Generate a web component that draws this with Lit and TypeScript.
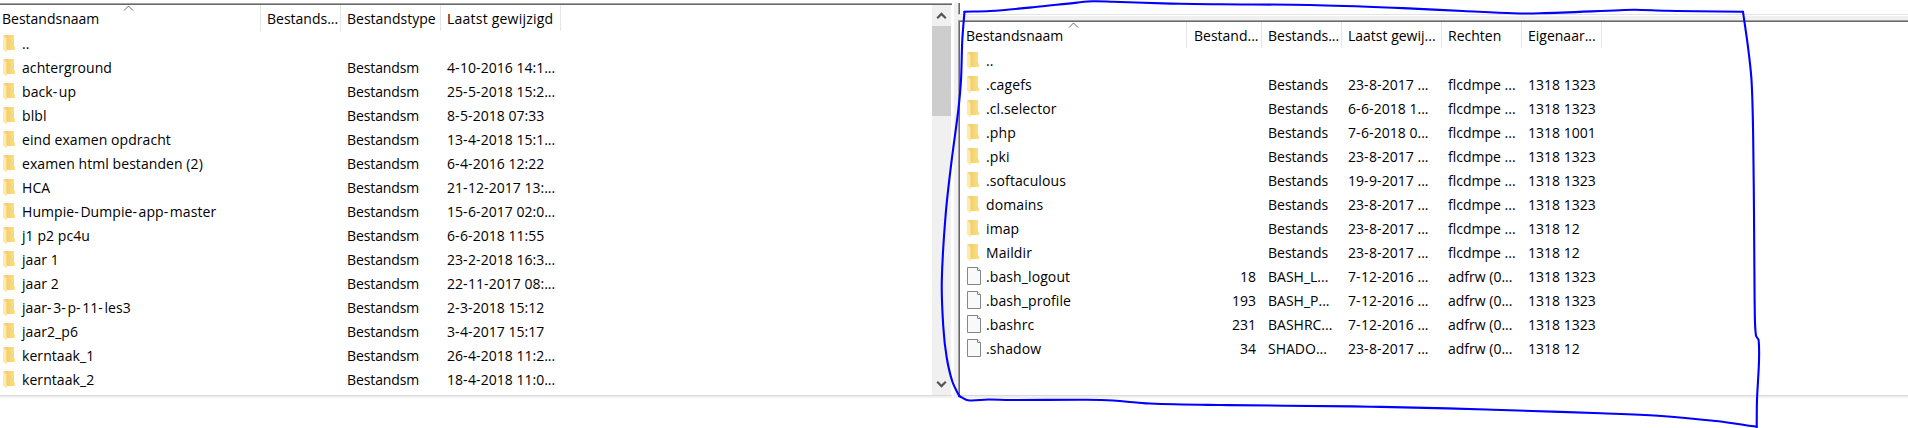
import { LitElement, html, svg, css } from "lit";
import { customElement, property } from "lit/decorators.js";
import { classMap } from "lit/directives/class-map.js";

type Kind = "folder" | "file";
interface Entry {
  kind: Kind;
  cells: string[];
}
type Point = [number, number];

const dir = (...cells: string[]): Entry => ({ kind: "folder", cells });
const file = (...cells: string[]): Entry => ({ kind: "file", cells });
const local = (name: string, date: string) => dir(name, "", "Bestandsm", date);
const remote = (name: string, date: string, owner: string) =>
  dir(name, "", "Bestands", date, "flcdmpe ...", owner);

const LOCAL_COLUMNS = ["Bestandsnaam", "Bestands...", "Bestandstype", "Laatst gewijzigd"];
const LOCAL: Entry[] = [
  dir(".."),
  local("achterground", "4-10-2016 14:1..."),
  local("back-up", "25-5-2018 15:2..."),
  local("blbl", "8-5-2018 07:33"),
  local("eind examen opdracht", "13-4-2018 15:1..."),
  local("examen html bestanden (2)", "6-4-2016 12:22"),
  local("HCA", "21-12-2017 13:..."),
  local("Humpie-Dumpie-app-master", "15-6-2017 02:0..."),
  local("j1 p2 pc4u", "6-6-2018 11:55"),
  local("jaar 1", "23-2-2018 16:3..."),
  local("jaar 2", "22-11-2017 08:..."),
  local("jaar-3-p-11-les3", "2-3-2018 15:12"),
  local("jaar2_p6", "3-4-2017 15:17"),
  local("kerntaak_1", "26-4-2018 11:2..."),
  local("kerntaak_2", "18-4-2018 11:0..."),
];

const REMOTE_COLUMNS = ["Bestandsnaam", "Bestand...", "Bestands...", "Laatst gewij...", "Rechten", "Eigenaar..."];
const REMOTE: Entry[] = [
  dir(".."),
  remote(".cagefs", "23-8-2017 ...", "1318 1323"),
  remote(".cl.selector", "6-6-2018 1...", "1318 1323"),
  remote(".php", "7-6-2018 0...", "1318 1001"),
  remote(".pki", "23-8-2017 ...", "1318 1323"),
  remote(".softaculous", "19-9-2017 ...", "1318 1323"),
  remote("domains", "23-8-2017 ...", "1318 1323"),
  remote("imap", "23-8-2017 ...", "1318 12"),
  remote("Maildir", "23-8-2017 ...", "1318 12"),
  file(".bash_logout", "18", "BASH_L...", "7-12-2016 ...", "adfrw (0...", "1318 1323"),
  file(".bash_profile", "193", "BASH_P...", "7-12-2016 ...", "adfrw (0...", "1318 1323"),
  file(".bashrc", "231", "BASHRC...", "7-12-2016 ...", "adfrw (0...", "1318 1323"),
  file(".shadow", "34", "SHADO...", "23-8-2017 ...", "adfrw (0...", "1318 12"),
];

/* Hand-drawn outline, one list of points per stroke between sharp corners. */
const STROKES: Point[][] = [
  [[964.5, 11.7], [990, 11], [1033, 7.3], [1077, 2.6], [1093, 1.3], [1113, 1.8], [1180, 3.8], [1220, 4.3], [1310, 5], [1393, 7.7], [1463, 11], [1513, 13.3], [1540, 13.3], [1620, 10.2], [1635, 9.7], [1667, 10.8], [1743, 11.8]],
  [[1743, 11.8], [1748, 47], [1751.5, 80], [1753, 127], [1754, 213], [1754.8, 314], [1756, 335.7], [1758.6, 340], [1759, 361], [1757, 400], [1756.7, 427]],
  [[1756.7, 426.7], [1715.8, 421], [1658, 415.7], [1601, 413.3], [1486, 409.5], [1371, 406.7], [1220, 405], [1150, 403.5], [1113, 400.5], [1086, 399.8], [1010, 400], [988, 399.5], [968, 400.3], [959.3, 396]],
  [[959.3, 396], [952.5, 382], [946.7, 357.5], [943.3, 327], [941.8, 281], [945.7, 214], [951.7, 160], [958.3, 110], [961, 80], [962.3, 40], [964.5, 11.7]],
];

function smooth(p: Point[]): string {
  let d = `M${p[0]}`;
  for (let i = 0; i < p.length - 1; i++) {
    const a = p[i - 1] ?? p[i], b = p[i], c = p[i + 1], e = p[i + 2] ?? c;
    const len = Math.hypot(c[0] - b[0], c[1] - b[1]) / 3;
    const t1 = Math.hypot(c[0] - a[0], c[1] - a[1]) || 1;
    const t2 = Math.hypot(e[0] - b[0], e[1] - b[1]) || 1;
    d += `C${b[0] + ((c[0] - a[0]) / t1) * len},${b[1] + ((c[1] - a[1]) / t1) * len} ` +
      `${c[0] - ((e[0] - b[0]) / t2) * len},${c[1] - ((e[1] - b[1]) / t2) * len} ${c}`;
  }
  return d;
}

/* Gives hyphens a wider advance than the font does. */
const spaced = (text: string) =>
  text.split(/(-)/).map((part) => (part === "-" ? html`<span class="hyphen">-</span>` : part));

const folderIcon = html`<svg class="icon" width="16" height="20" viewBox="0 0 16 20">
  <defs><linearGradient id="g" x1="0" x2="1" y1="0" y2="0"><stop offset="0" stop-color="#eecb68" /><stop offset="1" stop-color="#fddf85" /></linearGradient></defs>
  <path d="M2 1H12V12.5H13V16H4Z" fill="url(#g)" />
  <path d="M1 1L4.4 4.2V18.2L1 15.7Z" fill="#ffeaa9" />
  <path d="M1 1H2L5 4V18H4.4L4.4 4.4Z" fill="#f7dc8d" />
</svg>`;

const fileIcon = html`<svg class="icon" width="16" height="20" viewBox="0 0 16 20">
  <path d="M1.5 0.5H11.5L14.5 3.5V17.5H1.5Z" fill="#f8f9fa" stroke="#858585" />
  <path d="M11.5 0.5V3.5H14.5" fill="#fff" stroke="#858585" />
</svg>`;

@customElement("file-list")
class FileList extends LitElement {
  @property({ attribute: false }) columns: string[] = [];
  @property({ attribute: false }) rows: Entry[] = [];

  static styles = css`
    :host {
      display: block;
      flex: 1;
      min-width: 0;
      overflow: hidden;
      background: #fff;
      --tracks: 261px 80px 100px 120px;
    }
    :host(.remote) {
      --tracks: 227px 75px 80px 100px 80px 80px;
    }
    .head,
    .row {
      display: grid;
      grid-template-columns: var(--tracks);
      white-space: pre;
    }
    .head {
      position: relative;
      height: 26px;
      line-height: 27px;
    }
    .head .cell {
      height: 26px;
      border-right: 1px solid #e5e5e5;
    }
    .row {
      height: 24px;
      line-height: 25px;
    }
    .cell {
      box-sizing: border-box;
      padding-left: 6px;
    }
    .head .first {
      padding-left: 2px;
    }
    :host(.remote) .head .first {
      padding-left: 6px;
    }
    :host(.remote) .head .second {
      padding-left: 7px;
    }
    :host(.local) .head .cell:nth-child(4) {
      letter-spacing: 0.22px;
    }
    :host(.local) .row .cell:nth-child(3) {
      letter-spacing: -0.1px;
    }
    .name {
      display: flex;
      padding-left: 2px;
      letter-spacing: 0.07px;
    }
    .name .hyphen {
      letter-spacing: 1.6px;
    }
    .hyphen {
      letter-spacing: 0.4px;
    }
    :host(.remote) .name {
      padding-left: 6px;
      letter-spacing: 0.1px;
    }
    .icon {
      width: 16px;
      height: 20px;
      margin: 3px 4px 0 0;
      flex: none;
    }
    .num {
      text-align: right;
      padding-right: 6px;
    }
    .sort {
      position: absolute;
      left: 123px;
      top: 0;
    }
    :host(.remote) .sort {
      left: 108px;
    }
  `;

  render() {
    return html`
      <div class="head">
        ${this.columns.map((c, i) => html`<div class=${classMap({ cell: true, first: i === 0, second: i === 1 })}>${c}</div>`)}
        <svg class="sort" width="11" height="7" viewBox="0 0 11 7"><path d="M1 5.5L5.5 1L10 5.5" fill="none" stroke="#6a6a6a" /></svg>
      </div>
      ${this.rows.map(
        (r) => html`<div class="row">
          ${r.cells.map((c, i) =>
            i === 0
              ? html`<div class="name">${r.kind === "folder" ? folderIcon : fileIcon}<span>${spaced(c)}</span></div>`
              : html`<div class=${classMap({ cell: true, num: i === 1 })}>${spaced(c)}</div>`
          )}
        </div>`
      )}
    `;
  }
}

@customElement("app-root")
class AppRoot extends LitElement {
  static styles = css`
    :host {
      display: block;
      position: relative;
      width: 1908px;
      height: 428px;
      overflow: hidden;
      background: #fff;
      color: #000;
      font: 14px "Open Sans", "Noto Sans", sans-serif;
    }
    .panes {
      display: flex;
      box-sizing: border-box;
      height: 398px;
      padding-top: 3px;
    }
    .local-frame {
      display: flex;
      box-sizing: border-box;
      width: 952px;
      border-top: 1px solid #a0a0a0;
      border-bottom: 2px solid #f0f0f0;
    }
    .inner {
      display: flex;
      flex: 1;
      min-width: 0;
      border-top: 1px solid #696969;
      border-bottom: 1px solid #d9d9d9;
    }
    .scroll {
      display: flex;
      flex-direction: column;
      width: 19px;
      margin-right: 1px;
      background: #f0f0f0;
    }
    .btn {
      height: 21px;
      flex: none;
    }
    .thumb {
      height: 90px;
      background: #cdcdcd;
    }
    .track {
      flex: 1;
    }
    .splitter {
      width: 4px;
      margin-left: 2px;
      background: #f0f0f0;
    }
    .right {
      display: flex;
      flex-direction: column;
      flex: 1;
      min-width: 0;
    }
    .tree {
      height: 11px;
      border-left: 1px solid #a0a0a0;
      border-bottom: 1px solid #e3e3e3;
    }
    .tree-in {
      height: 11px;
      border-left: 1px solid #696969;
    }
    .gap {
      height: 4px;
      margin-top: 1px;
      background: #f0f0f0;
    }
    .remote-frame {
      display: flex;
      flex: 1;
      min-height: 0;
      border-top: 1px solid #a0a0a0;
      border-left: 1px solid #a0a0a0;
      border-bottom: 2px solid #f0f0f0;
    }
    .remote-in {
      border-left: 1px solid #696969;
    }
    .ink {
      position: absolute;
      inset: 0;
    }
  `;

  render() {
    return html`
      <div class="panes">
        <div class="local-frame">
          <div class="inner">
            <file-list class="local" .columns=${LOCAL_COLUMNS} .rows=${LOCAL}></file-list>
            <div class="scroll">
              <svg class="btn" width="19" height="21" viewBox="0 0 19 21"><path d="M5.2 13.2L9.5 8.9L13.8 13.2" fill="none" stroke="#555" stroke-width="2.2" /></svg>
              <div class="thumb"></div>
              <div class="track"></div>
              <svg class="btn" width="19" height="21" viewBox="0 0 19 21"><path d="M5.2 7.8L9.5 12.1L13.8 7.8" fill="none" stroke="#555" stroke-width="2.2" /></svg>
            </div>
          </div>
        </div>
        <div class="splitter"></div>
        <div class="right">
          <div class="tree"><div class="tree-in"></div></div>
          <div class="gap"></div>
          <div class="remote-frame">
            <div class="inner remote-in">
              <file-list class="remote" .columns=${REMOTE_COLUMNS} .rows=${REMOTE}></file-list>
            </div>
          </div>
        </div>
      </div>
      <svg class="ink" width="1908" height="428" viewBox="0 0 1908 428">
        ${STROKES.map((s) => svg`<path d=${smooth(s)} fill="none" stroke="#0000ff" stroke-width="2.1" stroke-linecap="round" />`)}
      </svg>
    `;
  }
}
